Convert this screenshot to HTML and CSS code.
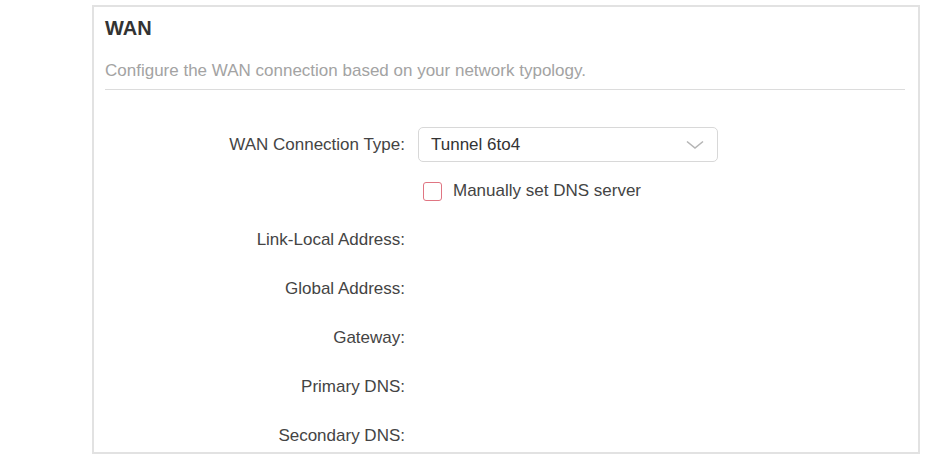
FILE: index.html
```html
<!DOCTYPE html>
<html lang="en">
<head>
  <meta charset="UTF-8">
  <title>WAN</title>
  <link rel="stylesheet" href="styles.css">
</head>
<body>
  <div class="page">
    <div class="card">
      <h2 class="card-title">WAN</h2>
      <p class="card-desc">Configure the WAN connection based on your network typology.</p>

      <div class="form">
        <div class="row row-select">
          <label class="label" for="wanType">WAN Connection Type:</label>
          <div class="select" id="wanType">
            <span>Tunnel 6to4</span>
            <svg class="chevron" width="18" height="10" viewBox="0 0 18 10">
              <polyline points="1,1.5 9,8 17,1.5" fill="none" stroke="#b5b5b5" stroke-width="1.6"/>
            </svg>
          </div>
        </div>

        <div class="row row-check">
          <div class="spacer"></div>
          <span class="checkbox"></span>
          <span class="check-text">Manually set DNS server</span>
        </div>

        <div class="info">
          <div class="row row-info"><span class="label">Link-Local Address:</span></div>
          <div class="row row-info"><span class="label">Global Address:</span></div>
          <div class="row row-info"><span class="label">Gateway:</span></div>
          <div class="row row-info"><span class="label">Primary DNS:</span></div>
          <div class="row row-info"><span class="label">Secondary DNS:</span></div>
        </div>
      </div>
    </div>
  </div>
</body>
</html>
```

FILE: styles.css
```css
body {
  margin: 0;
  background: #fff;
  font-family: "Liberation Sans", Arial, sans-serif;
  color: #333;
}
.page {
  padding: 5px 0 0 92px;
}
.card {
  box-sizing: border-box;
  width: 828px;
  height: 449px;
  border: 2px solid #e2e2e2;
  padding: 0 13px 0 11px;
  overflow: hidden;
}
.card-title {
  margin: 0;
  padding-top: 8px;
  font-size: 20px;
  font-weight: bold;
  line-height: 26px;
  color: #333;
}
.card-desc {
  margin: 0;
  padding: 20px 0 8px;
  font-size: 17px;
  line-height: 20px;
  color: #a3a3a3;
  border-bottom: 1px solid #dcdcdc;
}
.form {
  padding-top: 37px;
}
.row {
  display: flex;
  align-items: center;
}
.label,
.spacer {
  width: 300px;
  flex: none;
  text-align: right;
  font-size: 17px;
  color: #444;
}
.row-select {
  height: 35px;
}
.select {
  box-sizing: border-box;
  margin-left: 13px;
  width: 300px;
  height: 35px;
  border: 1px solid #d8d8d8;
  border-radius: 5px;
  display: flex;
  align-items: center;
  justify-content: space-between;
  padding: 0 13px 0 12px;
  font-size: 17px;
  color: #333;
}
.chevron {
  display: block;
}
.row-check {
  margin-top: 19px;
  height: 20px;
}
.checkbox {
  box-sizing: border-box;
  margin-left: 18px;
  width: 19px;
  height: 19px;
  border: 1.5px solid #e07582;
  border-radius: 3px;
}
.check-text {
  margin-left: 11px;
  font-size: 17px;
  color: #444;
}
.info {
  padding-top: 14px;
}
.row-info {
  height: 49px;
}
```
